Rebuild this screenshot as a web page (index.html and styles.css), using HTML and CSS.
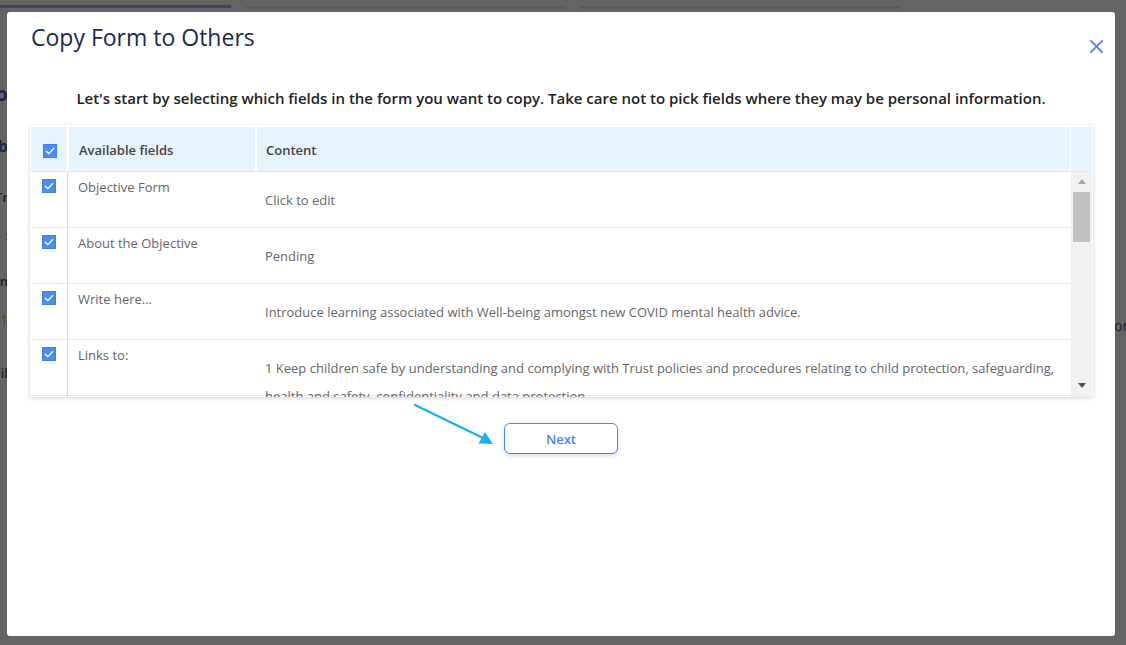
FILE: index.html
```html
<!DOCTYPE html>
<html lang="en">
<head>
<meta charset="utf-8">
<title>Copy Form to Others</title>
<link rel="stylesheet" href="styles.css">
</head>
<body>
<div class="page">
  <div class="tabs">
    <span class="tab tab-active"></span>
    <span class="tab tab-2"></span>
    <span class="tab tab-3"></span>
  </div>
  <div class="page-main">
    <div class="bg-left">
      <span class="frag frag-head f1">Go</span>
      <span class="frag frag-head f2">Lb</span>
      <span class="frag f3">Tr</span>
      <span class="frag frag-orange f4">:</span>
      <span class="frag f5">In</span>
      <span class="frag frag-orange f6">1</span>
      <span class="frag f7">Fil</span>
    </div>
    <div class="bg-right">
      <span class="frag f8">on</span>
    </div>
  </div>
</div>

<div class="modal" role="dialog" aria-labelledby="modal-title">
  <div class="modal-head">
    <h1 class="modal-title" id="modal-title">Copy Form to Others</h1>
    <button class="close" aria-label="Close">
      <svg width="13" height="13" viewBox="0 0 13 13"><path d="M1 1 L12 12 M12 1 L1 12" stroke="#4f86f7" stroke-width="1.8" fill="none" stroke-linecap="square"/></svg>
    </button>
  </div>

  <p class="intro">Let's start by selecting which fields in the form you want to copy. Take care not to pick fields where they may be personal information.</p>

  <div class="fields">
    <div class="fields-head">
      <div class="hcell hcell-check"><span class="cb"><svg width="10" height="8" viewBox="0 0 10 8"><path d="M1 4 L3.8 6.6 L9 1.2" stroke="#fff" stroke-width="1.3" fill="none"/></svg></span></div>
      <div class="hcell hcell-name">Available fields</div>
      <div class="hcell hcell-content">Content</div>
      <div class="hcell hcell-scroll"></div>
    </div>
    <div class="fields-body">
      <div class="rows">
        <div class="row">
          <div class="cell cell-check"><span class="cb"><svg width="10" height="8" viewBox="0 0 10 8"><path d="M1 4 L3.8 6.6 L9 1.2" stroke="#fff" stroke-width="1.3" fill="none"/></svg></span></div>
          <div class="cell cell-name">Objective Form</div>
          <div class="cell cell-content">Click to edit</div>
        </div>
        <div class="row">
          <div class="cell cell-check"><span class="cb"><svg width="10" height="8" viewBox="0 0 10 8"><path d="M1 4 L3.8 6.6 L9 1.2" stroke="#fff" stroke-width="1.3" fill="none"/></svg></span></div>
          <div class="cell cell-name">About the Objective</div>
          <div class="cell cell-content">Pending</div>
        </div>
        <div class="row">
          <div class="cell cell-check"><span class="cb"><svg width="10" height="8" viewBox="0 0 10 8"><path d="M1 4 L3.8 6.6 L9 1.2" stroke="#fff" stroke-width="1.3" fill="none"/></svg></span></div>
          <div class="cell cell-name">Write here...</div>
          <div class="cell cell-content">Introduce learning associated with Well-being amongst new COVID mental health advice.</div>
        </div>
        <div class="row">
          <div class="cell cell-check"><span class="cb"><svg width="10" height="8" viewBox="0 0 10 8"><path d="M1 4 L3.8 6.6 L9 1.2" stroke="#fff" stroke-width="1.3" fill="none"/></svg></span></div>
          <div class="cell cell-name">Links to:</div>
          <div class="cell cell-content">1 Keep children safe by understanding and complying with Trust policies and procedures relating to child protection, safeguarding, health and safety, confidentiality and data protection.</div>
        </div>
      </div>
      <div class="scrollbar">
        <span class="sb-arrow sb-up"></span>
        <span class="sb-thumb"></span>
        <span class="sb-track"></span>
        <span class="sb-arrow sb-down"></span>
      </div>
    </div>
  </div>

  <div class="actions">
    <button class="btn-next">Next</button>
  </div>

  <svg class="pointer" width="90" height="50" viewBox="0 0 90 50" aria-hidden="true">
    <line x1="5" y1="5" x2="73" y2="38" stroke="#19b2ef" stroke-width="2.4" stroke-linecap="round"/>
    <polygon points="83,44 75,32 68.5,43.5" fill="#19b2ef"/>
  </svg>
</div>
</body>
</html>
```

FILE: styles.css
```css
* { box-sizing: border-box; }

html, body {
  margin: 0;
  padding: 0;
}

body {
  width: 1126px;
  height: 645px;
  overflow: hidden;
  background: #646464;
  font-family: "Open Sans", "Noto Sans", "Liberation Sans", sans-serif;
  position: relative;
}

/* ---------- dimmed page behind the dialog ---------- */
.page {
  height: 645px;
  display: flex;
  flex-direction: column;
}

.tabs {
  display: flex;
  align-items: flex-start;
  padding-top: 5px;
  height: 12px;
}

.tab { display: block; height: 3px; }
.tab-active { width: 231px; background: #4c3b6b; }
.tab-2 { width: 320px; margin-left: 15px; margin-top: 1px; background: #5b5b5b; }
.tab-3 { width: 320px; margin-left: 14px; margin-top: 1px; background: #5b5b5b; }

.page-main {
  flex: 1;
  display: flex;
  justify-content: space-between;
}

.bg-left {
  width: 8px;
  overflow: hidden;
  display: flex;
  flex-direction: column;
  align-items: flex-end;
}

.bg-right {
  width: 12px;
  overflow: hidden;
  display: flex;
  flex-direction: column;
  align-items: flex-start;
}

.frag {
  display: block;
  white-space: nowrap;
  font-size: 13px;
  line-height: 16px;
  color: #1e1e1e;
  font-weight: 600;
}

.frag-head { color: #1c2748; font-weight: 700; }
.frag-orange { color: #6a4a20; }

.f1 { margin-top: 70px; font-size: 20px; line-height: 24px; }
.f2 { margin-top: 30px; font-size: 16px; line-height: 20px; }
.f3 { margin-top: 33px; }
.f4 { margin-top: 22px; }
.f5 { margin-top: 30px; }
.f6 { margin-top: 22px; }
.f7 { margin-top: 38px; }
.f8 { margin-top: 306px; font-weight: 400; color: #222; font-size: 14px; }

/* ---------- dialog ---------- */
.modal {
  position: absolute;
  left: 7px;
  top: 12px;
  width: 1108px;
  height: 624px;
  background: #fff;
  border-radius: 3px;
}

.modal-head {
  display: flex;
  justify-content: space-between;
  align-items: flex-start;
  padding: 9px 12px 0 24px;
}

.modal-title {
  margin: 0;
  font-size: 23px;
  line-height: 32px;
  font-weight: 500;
  color: #1c2a52;
}

.close {
  margin-top: 19px;
  width: 13px;
  height: 13px;
  padding: 0;
  border: 0;
  background: none;
  display: flex;
}

.intro {
  margin: 35px 0 17px;
  text-align: center;
  font-size: 15px;
  line-height: 20px;
  font-weight: 600;
  color: #222;
}

/* ---------- fields table ---------- */
.fields {
  margin: 0 22px 0 23px;
  height: 272px;
  padding: 2px 1px 0 1px;
  border-radius: 3px;
  box-shadow: 0 1px 4px rgba(0, 0, 0, 0.18);
  display: flex;
  flex-direction: column;
  overflow: hidden;
}

.fields-head {
  display: flex;
  height: 45px;
  border-bottom: 1px solid #e6e6e6;
}

.hcell {
  background: #e6f2fc;
  display: flex;
  align-items: center;
  padding-top: 1px;
  font-size: 13px;
  font-weight: 600;
  color: #444;
}

.hcell-check { width: 35px; margin-right: 3px; padding-left: 12px; padding-top: 4px; }
.hcell-name { width: 186px; margin-right: 2px; padding-left: 10px; }
.hcell-content { flex: 1; margin-right: 1px; padding-left: 9px; }
.hcell-scroll { width: 21px; }

.cb {
  width: 14px;
  height: 14px;
  background: #4d8bf5;
  border: 1px solid #3f7fe8;
  display: flex;
  align-items: center;
  justify-content: center;
}

.fields-body {
  flex: 1;
  display: flex;
  min-height: 0;
}

.rows {
  flex: 1;
  overflow: hidden;
}

.row {
  display: grid;
  grid-template-columns: 37px 189px 1fr;
  height: 56px;
  border-bottom: 1px solid #e6e6e6;
  font-size: 13px;
  color: #666;
}

.cell-check {
  border-right: 1px solid #d8d8d8;
  padding: 7px 0 0 11px;
}

.cell-name {
  padding: 6px 8px 0 10px;
  line-height: 18px;
}

.cell-content {
  padding: 14px 6px 0 8px;
  line-height: 28px;
}

.scrollbar {
  width: 21px;
  background: #f1f1f1;
  display: flex;
  flex-direction: column;
  align-items: center;
  padding: 7px 0 9px;
}

.sb-arrow {
  width: 0;
  height: 0;
  border-left: 4.5px solid transparent;
  border-right: 4.5px solid transparent;
}

.sb-up { border-bottom: 5px solid #a3a3a3; }
.sb-down { border-top: 5px solid #505050; }

.sb-thumb {
  margin-top: 8px;
  width: 17px;
  height: 50px;
  background: #c1c1c1;
}

.sb-track { flex: 1; }

/* ---------- actions ---------- */
.actions {
  display: flex;
  justify-content: center;
  margin-top: 26px;
}

.btn-next {
  width: 114px;
  height: 31px;
  border: 1px solid #4d86ec;
  border-radius: 6px;
  background: #fff;
  box-shadow: 0 2px 4px rgba(0, 0, 0, 0.15);
  font-family: inherit;
  font-size: 13px;
  font-weight: 600;
  color: #4a83ea;
  padding: 0;
}

.pointer {
  position: absolute;
  left: 403px;
  top: 388px;
}
```
